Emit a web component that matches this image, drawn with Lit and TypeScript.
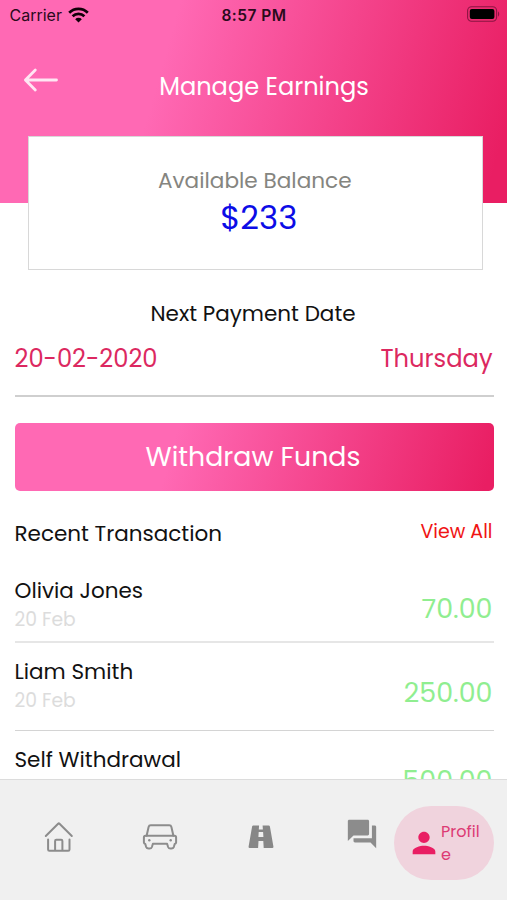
import { LitElement, html, css, svg, nothing } from "lit";

interface Transaction {
  name: string;
  date?: string;
  amount: string;
}

const transactions: Transaction[] = [
  { name: "Olivia Jones", date: "20 Feb", amount: "70.00" },
  { name: "Liam Smith", date: "20 Feb", amount: "250.00" },
  { name: "Self Withdrawal", amount: "500.00" },
];

class StatusBar extends LitElement {
  static styles = css`
    :host { display: block; font-family: Inter, sans-serif; }
    .bar {
      display: grid;
      grid-template-columns: 1fr auto 1fr;
      align-items: center;
      height: 29px;
      padding: 1px 8px 0 9.5px;
      box-sizing: border-box;
      color: #2a0a1b;
      font-size: 16px;
    }
    .carrier { display: flex; align-items: center; gap: 6px; }
    .time { font-size: 15.5px; font-weight: 600; letter-spacing: 0.5px; margin-left: -0.5px; }
    .battery { justify-self: end; display: block; margin: -2px -1px 0 0; }
    svg { display: block; }
  `;
  render() {
    return html`<div class="bar">
      <div class="carrier">
        <span>Carrier</span>
        <svg width="21" height="16" viewBox="0 0 21 16" fill="none" stroke="#100008" stroke-width="2.7">
          <path d="M1.2 5.8a13.2 13.2 0 0 1 18.6 0" />
          <path d="M4.6 9.3a8.4 8.4 0 0 1 11.8 0" />
          <path d="M10.5 15.6 7.2 12.2a4.7 4.7 0 0 1 6.6 0Z" fill="#100008" stroke="none" />
        </svg>
      </div>
      <div class="time">8:57 PM</div>
      <svg class="battery" width="33" height="16" viewBox="0 0 33 16">
        <rect x="0.6" y="0.7" width="29" height="14.6" rx="4" fill="none" stroke="#8a1442" stroke-width="1.1" />
        <rect x="2.8" y="2.9" width="24.6" height="10.2" rx="2" fill="#000" />
        <path d="M31 5.5c1.6.6 1.6 4.4 0 5Z" fill="#8a1442" />
      </svg>
    </div>`;
  }
}
customElements.define("status-bar", StatusBar);

class TransactionRow extends LitElement {
  static properties = { item: { attribute: false } };
  declare item: Transaction;
  static styles = css`
    :host { display: block; }
    .row { display: flex; justify-content: space-between; }
    .who { padding-top: 15px; }
    .name { font-size: 21.5px; line-height: 28px; color: #111; }
    .date { font-size: 18.7px; line-height: 29px; color: #dcdcdc; }
    .amount { padding: var(--amount-top, 34px) 1px 0 0; font-size: 26.9px; line-height: 32px; color: #90ee90; }
  `;
  render() {
    const t = this.item;
    return html`<div class="row">
      <div class="who">
        <div class="name">${t.name}</div>
        ${t.date ? html`<div class="date">${t.date}</div>` : nothing}
      </div>
      <div class="amount">${t.amount}</div>
    </div>`;
  }
}
customElements.define("transaction-row", TransactionRow);

const homeIcon = svg`<svg width="30" height="32" viewBox="43.5 821 30 32" fill="none" stroke="#8c8c8c" stroke-width="2" stroke-linecap="round" stroke-linejoin="round">
  <path d="M45.3 836 57.6 823.7q.7-.7 1.4 0L71.3 836M47.6 839.6V849.5q0 1.3 1.3 1.3H67.7q1.3 0 1.3-1.3V839.6M54.6 850.5V841q0-1.2 1.2-1.2H60.7q1.2 0 1.2 1.2V850.5" />
</svg>`;

const carIcon = svg`<svg width="36" height="28" viewBox="141.7 823 36 28" fill="none" stroke="#8c8c8c" stroke-width="2" stroke-linejoin="round" stroke-linecap="round">
  <path d="M146.3 835.8 148.3 827q.4-1.7 2.1-1.7H169q1.7 0 2.1 1.7L173.1 835.8Z" />
  <path d="M146.3 835.8H145.2Q143.6 835.8 143.6 837.4V842.5Q143.6 843.6 145 844L145.8 846.8Q146.5 848.6 148.3 848.6H149.2Q151 848.6 151.6 847L152.6 843.8H166.8L167.8 847Q168.4 848.6 170.2 848.6H171.1Q172.9 848.6 173.6 846.8L174.4 844Q175.8 843.6 175.8 842.5V837.4Q175.8 835.8 174.2 835.8H173.1" />
  <g fill="#8c8c8c" stroke="none"><circle cx="149" cy="840.2" r="1.2" /><circle cx="170.4" cy="840.2" r="1.2" /></g>
</svg>`;

const roadIcon = svg`<svg width="26" height="24" viewBox="0 0 26 24">
  <path fill="#878787" fill-rule="evenodd" d="M5.4.5H11.1L10.8 4.6H14.9L14.6.5H20.6Q21.7.5 21.9 1.5L25.4 21.6Q25.6 23 24.4 23H15.7L15.3 15.9H10.5L10.1 23H1.6Q.4 23 .6 21.6L4.1 1.5Q4.3.5 5.4.5ZM10.7 6.9 10.4 11.9H15.4L15.1 6.9Z" />
</svg>`;

const chatIcon = svg`<svg width="34" height="34" viewBox="0 0 24 24">
  <path fill="#8c8c8c" d="M21 6h-2v9H6v2c0 .55.45 1 1 1h11l4 4V7c0-.55-.45-1-1-1zm-4 6V3c0-.55-.45-1-1-1H3c-.55 0-1 .45-1 1v14l4-4h10c.55 0 1-.45 1-1z" />
</svg>`;

const personIcon = svg`<svg class="person" width="34" height="34" viewBox="0 0 24 24">
  <path fill="#e91e63" d="M12 12c2.21 0 4-1.79 4-4s-1.79-4-4-4-4 1.79-4 4 1.79 4 4 4zm0 2c-2.67 0-8 1.34-8 4v2h16v-2c0-2.66-5.33-4-8-4z" />
</svg>`;

class BottomNav extends LitElement {
  static styles = css`
    :host { display: block; }
    .nav {
      display: grid;
      grid-template-columns: 101px 101px 101px 82.5px 100px;
      box-sizing: border-box;
      height: 121px;
      padding: 27px 0 0 8px;
      border-top: 1px solid #dcdcdc;
      background: #f0f0f0;
    }
    svg { display: block; }
    .tab { display: flex; justify-content: center; align-items: center; height: 60px; }
    .chat { justify-content: flex-end; height: 54px; padding-right: 15px; }
    .profile {
      display: flex;
      align-items: center;
      box-sizing: border-box;
      height: 74px;
      margin-top: -1px;
      padding-left: 13.5px;
      border-radius: 37px;
      background: #f0d3dd;
      color: #dd3a74;
      font-size: 16px;
      line-height: 22.5px;
      white-space: normal;
    }
    .person { flex: none; }
    .label { width: 43px; padding-top: 1px; overflow-wrap: anywhere; }
  `;
  render() {
    return html`<nav class="nav">
      <div class="tab">${homeIcon}</div>
      <div class="tab">${carIcon}</div>
      <div class="tab">${roadIcon}</div>
      <div class="tab chat">${chatIcon}</div>
      <div class="profile">${personIcon}<span class="label">Profile</span></div>
    </nav>`;
  }
}
customElements.define("bottom-nav", BottomNav);

class AppRoot extends LitElement {
  static styles = css`
    :host {
      display: flex;
      flex-direction: column;
      height: 900px;
      overflow: hidden;
      background: #fff;
      color: #111;
      font-family: Poppins, Inter, "Open Sans", sans-serif;
      white-space: nowrap;
    }
    .header {
      flex: none;
      height: 203px;
      background: linear-gradient(106deg, #ff69b4 32%, #e91e63 96%);
    }
    .titlebar {
      display: grid;
      grid-template-columns: 36px 1fr 36px;
      padding: 37px 24px 0 23px;
      color: #fff;
    }
    .back { display: block; margin-top: 0.5px; }
    .title { margin-top: 4px; padding-left: 22px; text-align: center; font-size: 24.1px; line-height: 33px; }
    .card {
      flex: none;
      box-sizing: border-box;
      height: 134.5px;
      margin: -67.5px 24px 0 27.5px;
      padding-top: 29px;
      border: 1px solid #d8d8d8;
      background: #fff;
      text-align: center;
    }
    .caption { font-size: 21.6px; line-height: 30px; padding-right: 1px; color: #858580; }
    .balance { font-size: 32.5px; line-height: 44px; padding-left: 7px; color: #0c0ce6; }
    .content { flex: 1; min-height: 0; overflow: hidden; padding: 0 13.5px 0 14.5px; }
    .next { margin-top: 28.5px; padding-right: 2px; text-align: center; font-size: 21.5px; line-height: 30px; }
    .dates {
      display: flex;
      justify-content: space-between;
      box-sizing: border-box;
      height: 68.5px;
      padding: 14.5px 1px 0 0;
      border-bottom: 2px solid #cfcfcf;
      color: #dc2860;
      font-size: 24.2px;
      line-height: 32px;
    }
    .withdraw {
      display: block;
      width: 100%;
      height: 67.4px;
      margin: 26.4px 0 0;
      padding: 0 2px 0 0;
      border: 0;
      border-radius: 5px;
      background: linear-gradient(106deg, #ff69b4 33%, #e91e63 98%);
      color: #fff;
      font: inherit;
      font-size: 26.8px;
    }
    .recent {
      display: flex;
      justify-content: space-between;
      height: 43px;
      margin-top: 28px;
      padding-right: 1px;
      line-height: 30px;
      font-size: 21.5px;
    }
    .all { margin-top: -2px; font-size: 19px; color: #f01414; }
    .first { --amount-top: 30.8px; height: 79px; border-bottom: 2px solid #e6e6e6; }
    .second { height: 87px; border-bottom: 1px solid #d4d4d4; }
    .third { --amount-top: 34.5px; height: 90px; }
    bottom-nav { flex: none; }
  `;
  render() {
    const rows = ["first", "second", "third"];
    return html`
      <header class="header">
        <status-bar></status-bar>
        <div class="titlebar">
          <svg class="back" width="36" height="26" viewBox="0 0 36 26" fill="none" stroke="#ffe6f3" stroke-width="2.8" stroke-linecap="round" stroke-linejoin="round">
            <path d="M12.3 2.9 2.4 13 12.3 23.1M2.8 13H33.5" />
          </svg>
          <div class="title">Manage Earnings</div>
        </div>
      </header>
      <section class="card">
        <div class="caption">Available Balance</div>
        <div class="balance">$233</div>
      </section>
      <main class="content">
        <div class="next">Next Payment Date</div>
        <div class="dates"><span>20-02-2020</span><span>Thursday</span></div>
        <button class="withdraw">Withdraw Funds</button>
        <div class="recent"><span>Recent Transaction</span><span class="all">View All</span></div>
        ${transactions.map((t, i) => html`<transaction-row class=${rows[i]} .item=${t}></transaction-row>`)}
      </main>
      <bottom-nav></bottom-nav>
    `;
  }
}
customElements.define("app-root", AppRoot);
